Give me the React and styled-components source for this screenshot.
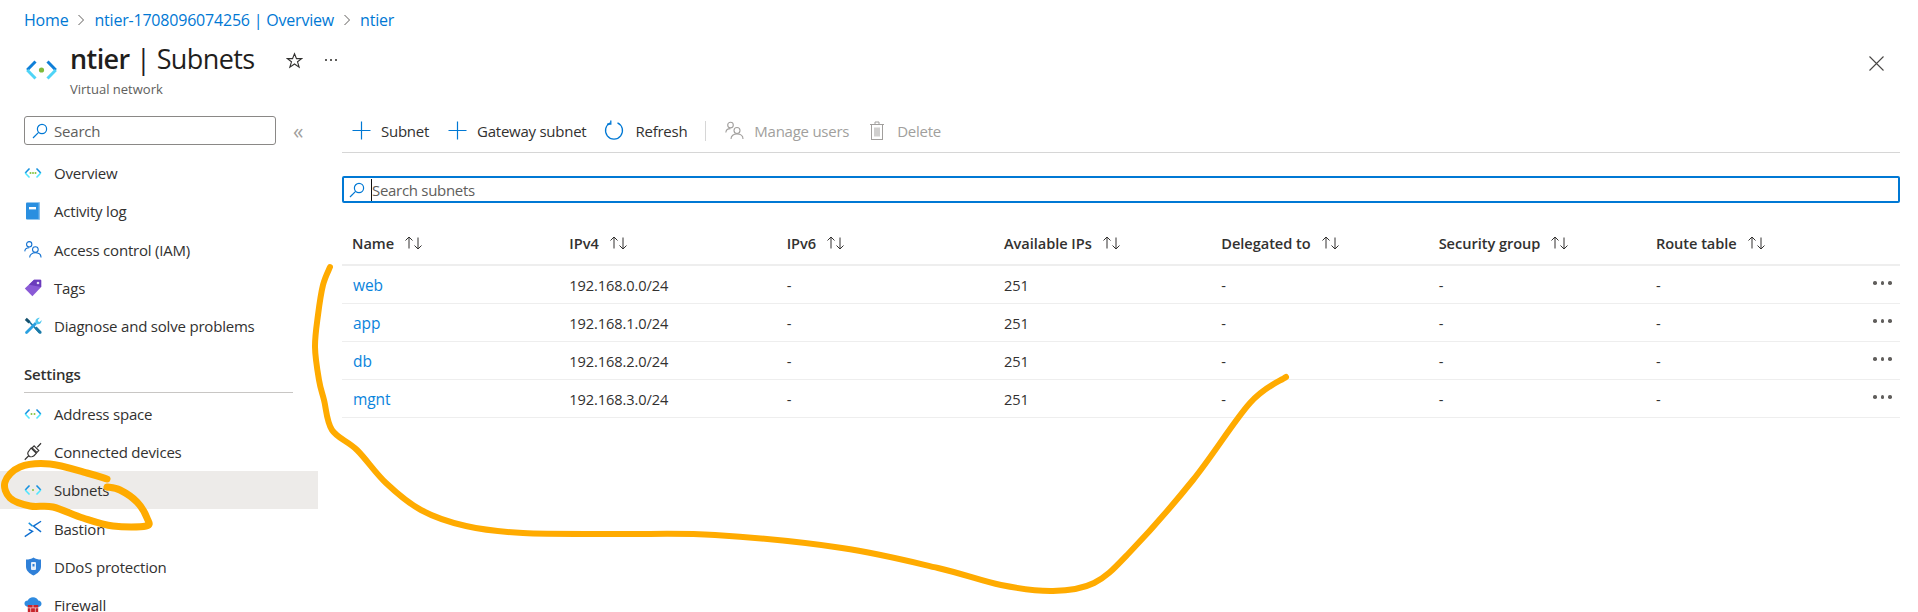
import React from 'react';
import styled, { createGlobalStyle } from 'styled-components';

const GlobalStyle = createGlobalStyle`
  html, body {
    margin: 0;
    padding: 0;
    background: #fff;
    overflow: hidden;
  }
  body {
    font-family: "Open Sans", "Noto Sans", sans-serif;
    color: #323130;
  }
`;

const Page = styled.div`
  position: relative;
  width: 1918px;
  height: 612px;
  overflow: hidden;
`;

const Breadcrumbs = styled.nav`
  display: flex;
  align-items: center;
  gap: 9px;
  height: 20px;
  padding: 10px 0 0 24px;
  font-size: 16px;
  letter-spacing: -0.2px;
  color: #0078d4;
`;

const Header = styled.header`
  display: flex;
  align-items: flex-start;
  height: 76px;
  padding: 10px 34px 0 25px;
`;

const HeaderIcon = styled.div`
  width: 45px;
  padding-top: 20px;
`;

const TitleBlock = styled.div`
  display: flex;
  flex-direction: column;
`;

const Title = styled.h1`
  margin: 0;
  font-size: 27px;
  line-height: 38px;
  font-weight: 400;
  letter-spacing: -0.6px;
  color: #1f1e1d;

  b {
    font-weight: 600;
  }
`;

const Subtitle = styled.div`
  font-size: 13px;
  line-height: 18px;
  margin-top: 2px;
  color: #605e5c;
`;

const HeaderActions = styled.div`
  display: flex;
  align-items: center;
  gap: 22px;
  height: 40px;
  margin-left: 31px;
  flex: 1;
`;

const Ellipsis = styled.div`
  display: flex;
  gap: 3px;
`;

const HeaderDot = styled.i`
  width: 2px;
  height: 2px;
  background: #605e5c;
`;

const Close = styled.div`
  margin-left: auto;
  display: flex;
  margin-top: 6px;
`;

const Body = styled.div`
  display: flex;
`;

const Sidebar = styled.aside`
  width: 318px;
  flex: none;
`;

const SideSearchRow = styled.div`
  display: flex;
  align-items: center;
  padding-left: 24px;
  margin-bottom: 9px;
`;

const SideSearch = styled.div`
  display: flex;
  align-items: center;
  gap: 6px;
  box-sizing: border-box;
  width: 252px;
  height: 29px;
  padding-left: 7px;
  border: 1px solid #8a8886;
  border-radius: 3px;
  font-size: 15px;
  letter-spacing: -0.2px;
  color: #605e5c;
`;

const Collapse = styled.div`
  margin-left: 17px;
  font-size: 21px;
  line-height: 24px;
  color: #a19f9d;
`;

const NavItem = styled.div`
  display: flex;
  align-items: center;
  gap: 12px;
  height: 38.3px;
  padding-left: 24px;
  font-size: 15px;
  letter-spacing: -0.2px;
  color: #323130;
  background: ${(p) => (p.$active ? '#edebe9' : 'transparent')};
`;

const NavIcon = styled.span`
  display: flex;
  width: 18px;
  height: 18px;
  align-items: center;
  justify-content: center;
`;

const NavHeading = styled.div`
  margin: 18px 25px 1px 24px;
  padding-bottom: 7px;
  border-bottom: 1px solid #c8c6c4;
  height: 22px;
  line-height: 22px;
  font-size: 15px;
  font-weight: 600;
  letter-spacing: -0.2px;
  color: #323130;
`;

const Main = styled.main`
  flex: 1;
  padding: 0 22px 0 24px;
`;

const Toolbar = styled.div`
  display: flex;
  align-items: center;
  height: 39px;
  margin-top: -2px;
  padding: 0 0 5px 10px;
  box-sizing: border-box;
  border-bottom: 1px solid #d6d6d6;
  font-size: 15px;
  letter-spacing: -0.25px;
`;

const ToolButton = styled.div`
  display: flex;
  align-items: center;
  gap: ${(p) => p.$gap || 10}px;
  margin-right: ${(p) => p.$after || 18}px;
  color: ${(p) => (p.$disabled ? '#a19f9d' : '#323130')};
`;

const ToolDivider = styled.div`
  width: 1px;
  height: 20px;
  background: #d6d6d6;
  margin: 0 19px 0 0;
`;

const FilterBox = styled.div`
  display: flex;
  align-items: center;
  gap: 6px;
  box-sizing: border-box;
  height: 27px;
  margin-top: 23px;
  padding-left: 5px;
  border: 2px solid #0078d4;
  border-radius: 2px;
  font-size: 15px;
  letter-spacing: -0.3px;
  color: #605e5c;
`;

const Caret = styled.span`
  border-left: 1px solid #111;
  line-height: 22px;
`;

const Row = styled.div`
  display: grid;
  grid-template-columns: repeat(7, 217.33px) 1fr;
  align-items: center;
  box-sizing: border-box;
  height: ${(p) => (p.$head ? 63 : 38)}px;
  padding-left: 10px;
  border-bottom: ${(p) => (p.$head ? 2 : 1)}px solid #eeeeee;
  padding-top: ${(p) => (p.$head ? 18 : 0)}px;
  font-size: 14.6px;
  letter-spacing: -0.1px;
`;

const HeadCell = styled.div`
  display: flex;
  align-items: center;
  gap: 10px;
  font-weight: 600;
  color: #323130;
  letter-spacing: -0.05px;
`;

const Cell = styled.div`
  color: #323130;
`;

const NameLink = styled.div`
  color: #0a84dc;
  font-size: 15.5px;
  padding-left: 1px;
`;

const More = styled.div`
  display: flex;
  justify-content: flex-end;
  gap: 4px;
  padding: 0 8px 3px 0;
`;

const Dot = styled.i`
  width: 3.5px;
  height: 3.5px;
  border-radius: 50%;
  background: #605e5c;
`;

const Scribble = styled.svg`
  position: absolute;
  left: 0;
  top: 0;
  pointer-events: none;
`;

// smooth line through the hand-drawn marker points
const smooth = (pts) => {
  let d = `M${pts[0][0]} ${pts[0][1]}`;
  for (let i = 0; i < pts.length - 1; i++) {
    const p0 = pts[i - 1] || pts[i];
    const p1 = pts[i];
    const p2 = pts[i + 1];
    const p3 = pts[i + 2] || p2;
    const c1 = [p1[0] + (p2[0] - p0[0]) / 6, p1[1] + (p2[1] - p0[1]) / 6];
    const c2 = [p2[0] - (p3[0] - p1[0]) / 6, p2[1] - (p3[1] - p1[1]) / 6];
    d += `C${c1[0]} ${c1[1]} ${c2[0]} ${c2[1]} ${p2[0]} ${p2[1]}`;
  }
  return d;
};

const longStroke = [
  [330, 267], [323, 285], [318, 315], [315, 347], [319, 380], [324, 400], [332, 430],
  [357, 450], [386, 483], [421, 510], [466, 526], [523, 533], [619, 534], [715, 535],
  [842, 548], [938, 568], [1001, 585], [1053, 591], [1094, 583], [1129, 553], [1193, 480],
  [1250, 403], [1286, 377],
];

const loopStroke = [
  [107, 479], [87, 473], [50, 464], [20, 467], [5, 482], [10, 498], [30, 506], [53, 507],
  [83, 518], [113, 526], [146, 526], [147, 518], [137, 502], [120, 490], [107, 487],
];

const Lens = ({ size = 16 }) => (
  <svg width={size} height={size} viewBox="0 0 16 16" fill="none" stroke="#0078d4" strokeWidth="1.2">
    <circle cx="10" cy="6" r="4.6" />
    <path d="M6.6 9.4 1 15" />
  </svg>
);

const Chevron = () => (
  <svg width="8" height="12" viewBox="0 0 8 12" fill="none" stroke="#605e5c" strokeWidth="1">
    <path d="M1.5 1 6.5 6 1.5 11" />
  </svg>
);

const Star = () => (
  <svg width="17" height="17" viewBox="0 0 18 18" fill="none" stroke="#323130" strokeWidth="1.2">
    <path d="M9 1.8 11.1 7h5.5l-4.400 3.400 1.700 5.600L9 12.700 4.100 16l1.700-5.600L1.400 7h5.500z" />
  </svg>
);

const VnetBig = () => (
  <svg width="33" height="20" viewBox="0 0 33 20" fill="none" strokeWidth="3">
    <path d="M10.500 1.500 2.200 10" stroke="#0f7fd8" />
    <path d="M2.200 10l8.300 8.500" stroke="#4fd4f7" />
    <path d="M22.500 1.500 30.800 10" stroke="#0f7fd8" />
    <path d="M30.800 10l-8.300 8.500" stroke="#4fd4f7" />
    <circle cx="16.500" cy="10" r="2.600" fill="#7fba3a" stroke="none" />
  </svg>
);

const VnetSmall = ({ dots = [9] }) => (
  <svg width="18" height="12" viewBox="0 0 18 12" fill="none" strokeWidth="1.6">
    <path d="M5.500 1.500 1.200 6" stroke="#1490df" />
    <path d="M1.200 6l4.300 4.500" stroke="#50e6ff" />
    <path d="M12.500 1.500 16.800 6" stroke="#1490df" />
    <path d="M16.800 6l-4.300 4.500" stroke="#50e6ff" />
    {dots.map((x) => (
      <circle key={x} cx={x} cy="6" r="1" fill="#86c440" stroke="none" />
    ))}
  </svg>
);

const BookIcon = () => (
  <svg width="16" height="18" viewBox="0 0 16 18">
    <rect x="1" y="0.500" width="14" height="17" rx="1" fill="#2a8fe0" />
    <rect x="13.600" y="0.500" width="1.400" height="17" fill="#86bdec" />
    <rect x="4" y="5" width="7" height="2.400" fill="#fff" />
  </svg>
);

const PeopleIcon = ({ color = '#0f6fd0' }) => (
  <svg width="19" height="19" viewBox="0 0 19 19" fill="none" stroke={color} strokeWidth="1.100">
    <circle cx="5.500" cy="4" r="2.800" />
    <circle cx="12" cy="9.500" r="3" />
    <path d="M.8 11.500C1 9 3 7.600 5.500 7.600" />
    <path d="M6 18c0-3.200 2.600-5 6-5s6 1.800 6 5" />
  </svg>
);

const TagIcon = () => (
  <svg width="18" height="18" viewBox="0 0 18 18">
    <path d="M10 .8h6.200c.6 0 1 .4 1 1V8L8.400 17.200.8 9.400z" fill="#8a5ad6" />
    <path d="M10 .8h6.200c.6 0 1 .4 1 1V8L5 5.800z" fill="#6b3cbc" />
    <circle cx="14" cy="4" r="1.300" fill="#e6dcf7" />
  </svg>
);

const ToolsIcon = () => (
  <svg width="18" height="18" viewBox="0 0 18 18" fill="none">
    <path d="M5 4.500 15.500 15.500" stroke="#1a7aa8" strokeWidth="1.800" />
    <path d="M.8 3 2.800.8 6.500 4.300 4.500 6.400z" fill="#14506e" />
    <path d="M10.500 11.500l2-2 4.700 4.800c.5.600.5 1.500 0 2.100-.6.600-1.600.6-2.200 0z" fill="#1a7aa8" />
    <path d="M1.500 14.500 11 5l2 2-9.500 9.500c-.6.600-1.400.6-2 0-.5-.6-.5-1.400 0-2z" fill="#2aa0e0" />
    <path d="M11.500 5.500C11 3 12.800.8 15.800.8l-2 2.200.4 1.500 1.500.4 2-2c0 3-2.200 4.800-4.700 4.300z" fill="#50c8ef" />
  </svg>
);

const PlugIcon = () => (
  <svg width="19" height="19" viewBox="0 0 19 19" fill="none" stroke="#323130" strokeWidth="1.200">
    <path d="M.8 18.200 5 14" />
    <path d="M14 5l4-4.200" />
    <path d="M7.500 5.800 13 11.400 10.500 14c-1.600 1.400-4 1.400-5.300 0-1.400-1.400-1.400-3.600 0-5.200z" />
    <path d="M10.700 3.500 15.600 8.500 13.600 10.500 8.600 5.600z" />
  </svg>
);

const BastionIcon = () => (
  <svg width="19" height="18" viewBox="0 0 19 18" fill="none" stroke="#0f6fd0" strokeWidth="1.500">
    <path d="M.8 17 9 11.500l-4-2" />
    <path d="M18 .8 10 6l8 6" />
    <path d="M5 2.500 9 6" stroke="#1490df" />
  </svg>
);

const ShieldIcon = () => (
  <svg width="17" height="19" viewBox="0 0 17 19">
    <path d="M8.500.5c2 1.400 4.600 2 7.500 2v7c0 4.200-3.400 7-7.500 9C4.400 16.500 1 13.700 1 9.500v-7C3.900 2.500 6.500 1.900 8.500.5z" fill="#2f80d8" />
    <rect x="6" y="5" width="5" height="8" rx="1" fill="#e4eefa" />
    <rect x="7.500" y="7" width="2" height="2.500" fill="#2f80d8" />
  </svg>
);

const CloudIcon = () => (
  <svg width="19" height="19" viewBox="0 0 19 19">
    <path d="M4.500 11C2 11 .5 9.500.5 7.500S2 4.200 4 4.200C4.700 2 6.800.7 9.500.7c2.800 0 4.900 1.500 5.500 3.500 2 0 3.500 1.400 3.500 3.400S17 11 14.500 11z" fill="#2f8be0" />
    <rect x="4" y="9" width="11" height="8" fill="#c8242b" />
    <path d="M4 12h11M9.500 9v3M7 12v5M12 12v5" stroke="#fff" strokeWidth="0.600" />
  </svg>
);

const Plus = () => (
  <svg width="19" height="19" viewBox="0 0 19 19" stroke="#0078d4" strokeWidth="1.200">
    <path d="M9.500 .5v18M.5 9.500h18" />
  </svg>
);

const RefreshIcon = () => (
  <svg width="20" height="21" viewBox="0 0 20 21" fill="none" stroke="#0078d4" strokeWidth="1.300">
    <path d="M6.500 2.800A8.500 8.500 0 1 0 13.500 2.800" />
    <path d="M6.800 .6v3.600H3" />
  </svg>
);

const TrashIcon = () => (
  <svg width="14" height="19" viewBox="0 0 14 19" fill="none" stroke="#a19f9d" strokeWidth="1">
    <path d="M0 3.500h14M5 3.500V1h4v2.500" />
    <rect x="1.500" y="3.500" width="11" height="15" />
    <path d="M5 6.500v9M7 6.500v9M9 6.500v9" />
  </svg>
);

const SortArrows = () => (
  <svg width="19" height="14" viewBox="0 0 19 14" fill="none" stroke="#323130" strokeWidth="1">
    <path d="M5 12.500V1M1.500 4.500 5 1l3.500 3.500" />
    <path d="M14 1.500V13M10.500 9.500 14 13l3.500-3.500" />
  </svg>
);

const topNav = [
  { label: 'Overview', icon: <VnetSmall dots={[6.5, 9, 11.5]} /> },
  { label: 'Activity log', icon: <BookIcon /> },
  { label: 'Access control (IAM)', icon: <PeopleIcon /> },
  { label: 'Tags', icon: <TagIcon /> },
  { label: 'Diagnose and solve problems', icon: <ToolsIcon /> },
];

const settingsNav = [
  { label: 'Address space', icon: <VnetSmall dots={[7.5, 10.5]} /> },
  { label: 'Connected devices', icon: <PlugIcon /> },
  { label: 'Subnets', icon: <VnetSmall />, active: true },
  { label: 'Bastion', icon: <BastionIcon /> },
  { label: 'DDoS protection', icon: <ShieldIcon /> },
  { label: 'Firewall', icon: <CloudIcon /> },
];

const columns = ['Name', 'IPv4', 'IPv6', 'Available IPs', 'Delegated to', 'Security group', 'Route table'];

const subnets = [
  ['web', '192.168.0.0/24'],
  ['app', '192.168.1.0/24'],
  ['db', '192.168.2.0/24'],
  ['mgnt', '192.168.3.0/24'],
];

const renderNav = (item) => (
  <NavItem key={item.label} $active={item.active}>
    <NavIcon>{item.icon}</NavIcon>
    {item.label}
  </NavItem>
);

export default function App() {
  return (
    <Page>
      <GlobalStyle />
      <Breadcrumbs>
        <span>Home</span>
        <Chevron />
        <span>ntier-1708096074256 | Overview</span>
        <Chevron />
        <span>ntier</span>
      </Breadcrumbs>
      <Header>
        <HeaderIcon>
          <VnetBig />
        </HeaderIcon>
        <TitleBlock>
          <Title>
            <b>ntier</b> | Subnets
          </Title>
          <Subtitle>Virtual network</Subtitle>
        </TitleBlock>
        <HeaderActions>
          <Star />
          <Ellipsis>
            <HeaderDot />
            <HeaderDot />
            <HeaderDot />
          </Ellipsis>
          <Close>
            <svg width="15" height="15" viewBox="0 0 15 15" stroke="#484644" strokeWidth="1.100">
              <path d="M.5 .5l14 14M14.500 .5l-14 14" />
            </svg>
          </Close>
        </HeaderActions>
      </Header>
      <Body>
        <Sidebar>
          <SideSearchRow>
            <SideSearch>
              <Lens />
              Search
            </SideSearch>
            <Collapse>«</Collapse>
          </SideSearchRow>
          {topNav.map(renderNav)}
          <NavHeading>Settings</NavHeading>
          {settingsNav.map(renderNav)}
        </Sidebar>
        <Main>
          <Toolbar>
            <ToolButton $after={19}>
              <Plus />
              Subnet
            </ToolButton>
            <ToolButton>
              <Plus />
              Gateway subnet
            </ToolButton>
            <ToolButton $gap={11}>
              <RefreshIcon />
              Refresh
            </ToolButton>
            <ToolDivider />
            <ToolButton $disabled $after={21}>
              <PeopleIcon color="#a19f9d" />
              Manage users
            </ToolButton>
            <ToolButton $disabled $gap={13}>
              <TrashIcon />
              Delete
            </ToolButton>
          </Toolbar>
          <FilterBox>
            <Lens />
            <Caret>Search subnets</Caret>
          </FilterBox>
          <Row $head>
            {columns.map((c) => (
              <HeadCell key={c}>
                {c}
                <SortArrows />
              </HeadCell>
            ))}
          </Row>
          {subnets.map(([name, range]) => (
            <Row key={name}>
              <NameLink>{name}</NameLink>
              <Cell>{range}</Cell>
              <Cell>-</Cell>
              <Cell>251</Cell>
              <Cell>-</Cell>
              <Cell>-</Cell>
              <Cell>-</Cell>
              <More>
                <Dot />
                <Dot />
                <Dot />
              </More>
            </Row>
          ))}
        </Main>
      </Body>
      <Scribble width="1918" height="612" viewBox="0 0 1918 612" fill="none" stroke="#ffab00" strokeLinecap="round" strokeLinejoin="round">
        <path strokeWidth="6" d={smooth(longStroke)} />
        <path strokeWidth="7" d={smooth(loopStroke)} />
      </Scribble>
    </Page>
  );
}
